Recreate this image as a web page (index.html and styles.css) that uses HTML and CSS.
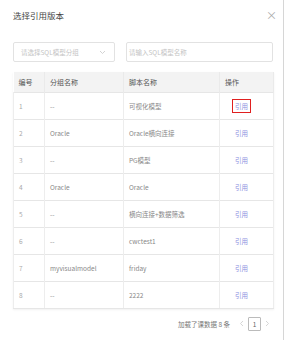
FILE: index.html
```html
<!DOCTYPE html>
<html lang="zh-CN">
<head>
    <meta charset="UTF-8" />
    <title>选择引用版本</title>
    <link rel="stylesheet" href="styles.css">
</head>
<body>
    <div class="dialog">
        <div class="dialog-header">
            <span class="title">选择引用版本</span>
            <span class="close">&times;</span>
        </div>

        <div class="filters">
            <div class="select">
                <span>请选择SQL模型分组</span>
                <svg width="7" height="5" viewBox="0 0 7 5"><path d="M1 1l2.5 2.5L6 1" fill="none" stroke="#c8c8c8" stroke-width="0.8"/></svg>
            </div>
            <div class="input"><span>请输入SQL模型名称</span></div>
        </div>

        <table class="grid">
            <colgroup>
                <col class="c1"><col class="c2"><col class="c3"><col class="c4">
            </colgroup>
            <thead>
                <tr><th>编号</th><th>分组名称</th><th>脚本名称</th><th>操作</th></tr>
            </thead>
            <tbody>
                <tr><td>1</td><td>--</td><td>可视化模型</td><td><a class="ref active">引用</a></td></tr>
                <tr><td>2</td><td>Oracle</td><td>Oracle横向连接</td><td><a class="ref">引用</a></td></tr>
                <tr><td>3</td><td>--</td><td>PG模型</td><td><a class="ref">引用</a></td></tr>
                <tr><td>4</td><td>Oracle</td><td>Oracle</td><td><a class="ref">引用</a></td></tr>
                <tr><td>5</td><td>--</td><td>横向连接+数据筛选</td><td><a class="ref">引用</a></td></tr>
                <tr><td>6</td><td>--</td><td>cwctest1</td><td><a class="ref">引用</a></td></tr>
                <tr><td>7</td><td>myvisualmodel</td><td>friday</td><td><a class="ref">引用</a></td></tr>
                <tr><td>8</td><td>--</td><td>2222</td><td><a class="ref">引用</a></td></tr>
            </tbody>
        </table>

        <div class="pager">
            <span class="total">加载了课数据 8 条</span>
            <svg class="arrow" width="5" height="7" viewBox="0 0 5 7"><path d="M4 1L1.5 3.5L4 6" fill="none" stroke="#ccc" stroke-width="0.8"/></svg>
            <span class="page">1</span>
            <svg class="arrow" width="5" height="7" viewBox="0 0 5 7"><path d="M1 1l2.5 2.5L1 6" fill="none" stroke="#ccc" stroke-width="0.8"/></svg>
        </div>
    </div>
</body>
</html>
```

FILE: styles.css
```css
* {
    box-sizing: border-box;
    margin: 0;
    padding: 0;
    font-family: "Noto Sans CJK SC", "Noto Sans", sans-serif;
}

body {
    background-color: #fff;
    width: 287px;
    height: 340px;
    overflow: hidden;
}

.dialog {
    width: 284px;
    height: 340px;
    border-right: 1px solid #d6d6d6;
    padding: 0 10px 0 13px;
    color: #555;
}

.dialog-header {
    display: flex;
    justify-content: space-between;
    align-items: center;
    height: 30px;
}

.title {
    font-size: 8.5px;
    color: #444;
}

.close {
    font-size: 11px;
    color: #aaa;
    margin-right: -4px;
}

.filters {
    display: flex;
    gap: 11px;
    margin-top: 12px;
    width: 260px;
}

.select, .input {
    height: 20px;
    border: 1px solid #e2e2e2;
    border-radius: 2px;
    font-size: 6.5px;
    color: #c4c4c4;
    display: flex;
    align-items: center;
    padding: 0 7px;
}

.select {
    width: 102px;
    justify-content: space-between;
    padding-right: 8px;
}

.input {
    flex: 1;
    padding-left: 2px;
}

.grid {
    width: 260px;
    margin-top: 10px;
    border-collapse: collapse;
    table-layout: fixed;
    font-size: 6.5px;
    box-shadow: 0 1px 2px rgba(0, 0, 0, 0.06);
}

.c1 { width: 31px; }
.c2 { width: 79px; }
.c3 { width: 96px; }
.c4 { width: 54px; }

.grid th {
    background-color: #f3f3f3;
    color: #555;
    font-size: 7px;
    font-weight: normal;
    text-align: left;
    height: 20px;
    padding: 0 5px;
    border-right: 1px solid #eaeaea;
}

.grid td {
    height: 27px;
    padding: 0 5px;
    color: #888;
    border-top: 1px solid #e6e6e6;
    border-right: 1px solid #ededed;
    border-left: 1px solid #ededed;
    white-space: nowrap;
}

.grid td:first-child {
    color: #aaa;
}

.grid tr:last-child td {
    border-bottom: 1px solid #e6e6e6;
}

.ref {
    display: inline-block;
    margin-left: 7px;
    padding: 1px 2px;
    color: #8c8fe0;
    border: 1px solid transparent;
}

.ref.active {
    border: 1.5px solid #e02020;
}

.pager {
    display: flex;
    justify-content: flex-end;
    align-items: center;
    gap: 4px;
    margin-top: 8px;
    padding-right: 3px;
    width: 260px;
    font-size: 6.5px;
    color: #777;
}

.total {
    margin-right: 5px;
}

.page {
    width: 13px;
    height: 14px;
    border: 1px solid #bbb;
    border-radius: 1px;
    display: flex;
    align-items: center;
    justify-content: center;
    color: #666;
}
```
